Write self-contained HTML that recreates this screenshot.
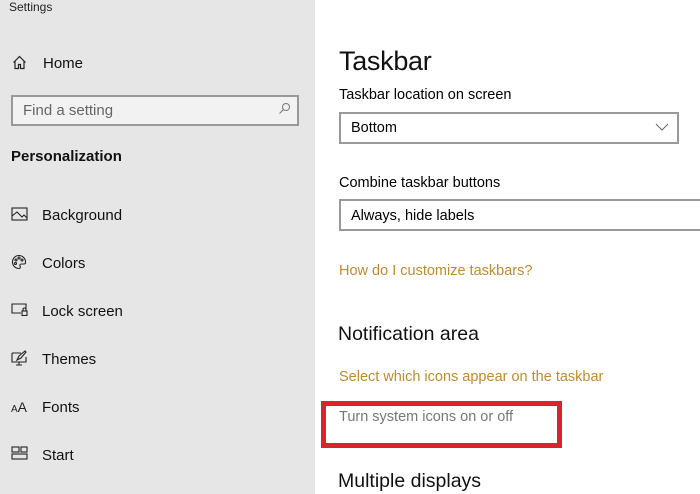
<!DOCTYPE html>
<html><head><style>
*{margin:0;padding:0;box-sizing:border-box}
body{width:700px;height:494px;overflow:hidden;background:#fff;font-family:"Liberation Sans",sans-serif;position:relative;color:#000}
.side{position:absolute;left:0;top:0;width:315px;height:494px;background:#e6e6e6}
.a{position:absolute;white-space:nowrap}
.nav{font-size:15px;color:#111}
.ic{position:absolute}
.box{position:absolute;border:2px solid #999;background:#fff}
.link{color:#c08a2e;font-size:14.5px}
</style></head><body>
<div class="side"></div>
<div class="a" style="left:9px;top:0px;font-size:12px;color:#222">Settings</div>
<svg class="ic" style="left:12px;top:55px" width="15" height="15" viewBox="0 0 15 15" fill="none" stroke="#222" stroke-width="1.2"><path d="M1.5 7.5L7.5 1.5L13.5 7.5M3 6v7.5h3.5V9.5h2v4H12V6"/></svg>
<div class="a nav" style="left:43px;top:55px">Home</div>
<div class="box" style="left:11px;top:95px;width:288px;height:31px;background:#f2f2f2;border-color:#999"></div>
<div class="a" style="left:23px;top:102px;font-size:15px;color:#666">Find a setting</div>
<svg class="ic" style="left:278px;top:102px" width="13" height="13" viewBox="0 0 13 13" fill="none" stroke="#777" stroke-width="1"><circle cx="8" cy="5" r="3.5"/><path d="M5.5 7.5L1.5 11.5"/></svg>
<div class="a" style="left:11px;top:148px;font-size:15px;font-weight:bold;color:#111">Personalization</div>
<svg class="ic" style="left:11px;top:207px" width="17" height="14" viewBox="0 0 17 14" fill="none" stroke="#222" stroke-width="1.1"><rect x="1" y="1" width="15" height="12"/><path d="M1 9l5-4 5 5 2-2 3 3"/></svg>
<div class="a nav" style="left:42px;top:207px">Background</div>
<svg class="ic" style="left:11px;top:254px" width="16" height="16" viewBox="0 0 16 16" fill="none" stroke="#222" stroke-width="1.1"><path d="M8 1.5a6.5 6.5 0 1 0 0 13c1.5 0 1.5-1.5 1-2.5s0-2 1.5-2H13a1.5 1.5 0 0 0 1.5-1.5A6.5 6.5 0 0 0 8 1.5z"/><circle cx="5" cy="6" r="1"/><circle cx="8" cy="4" r="1"/><circle cx="11" cy="6" r="1"/><circle cx="4.5" cy="9.5" r="1"/></svg>
<div class="a nav" style="left:42px;top:255px">Colors</div>
<svg class="ic" style="left:11px;top:302px" width="17" height="14" viewBox="0 0 17 14" fill="none" stroke="#222" stroke-width="1.1"><path d="M10 11H1V2h14v5"/><rect x="11" y="9" width="5" height="4.5"/><path d="M12 9V7.5a1.5 1.5 0 0 1 3 0V9"/></svg>
<div class="a nav" style="left:42px;top:303px">Lock screen</div>
<svg class="ic" style="left:11px;top:350px" width="17" height="16" viewBox="0 0 17 16" fill="none" stroke="#222" stroke-width="1.1"><path d="M1 3h9M1 3v9h14V7M8 12v3M5 15h6"/><path d="M6 10l2-4 6-5 1 1-5 6z"/></svg>
<div class="a nav" style="left:42px;top:351px">Themes</div>
<div class="a" style="left:11px;top:399px;font-size:10px;color:#222">A<span style="font-size:14px">A</span></div>
<div class="a nav" style="left:42px;top:399px">Fonts</div>
<svg class="ic" style="left:11px;top:446px" width="17" height="14" viewBox="0 0 17 14" fill="none" stroke="#222" stroke-width="1.1"><rect x="1" y="1" width="7" height="5"/><rect x="10" y="1" width="6" height="5"/><rect x="1" y="8" width="15" height="5"/></svg>
<div class="a nav" style="left:42px;top:447px">Start</div>

<div class="a" style="left:339px;top:46px;font-size:27px;color:#111;letter-spacing:-0.3px">Taskbar</div>
<div class="a" style="left:339px;top:87px;font-size:14.5px">Taskbar location on screen</div>
<div class="box" style="left:339px;top:112px;width:340px;height:32px"></div>
<div class="a" style="left:351px;top:120px;font-size:14.5px">Bottom</div>
<svg class="ic" style="left:655px;top:123px" width="14" height="8" viewBox="0 0 14 8" fill="none" stroke="#666" stroke-width="1"><path d="M1 1l6 6 6-6"/></svg>
<div class="a" style="left:339px;top:175px;font-size:14.5px">Combine taskbar buttons</div>
<div class="box" style="left:339px;top:199px;width:380px;height:32px"></div>
<div class="a" style="left:351px;top:208px;font-size:14.5px">Always, hide labels</div>
<div class="a link" style="left:339px;top:263px">How do I customize taskbars?</div>
<div class="a" style="left:338px;top:323px;font-size:19.5px;color:#111">Notification area</div>
<div class="a link" style="left:339px;top:369px">Select which icons appear on the taskbar</div>
<div class="a" style="left:339px;top:409px;font-size:14.5px;color:#777">Turn system icons on or off</div>
<div style="position:absolute;left:321px;top:401px;width:241px;height:47px;border:5px solid #d9232d"></div>
<div class="a" style="left:338px;top:470px;font-size:19.5px;color:#111">Multiple displays</div>
</body></html>
